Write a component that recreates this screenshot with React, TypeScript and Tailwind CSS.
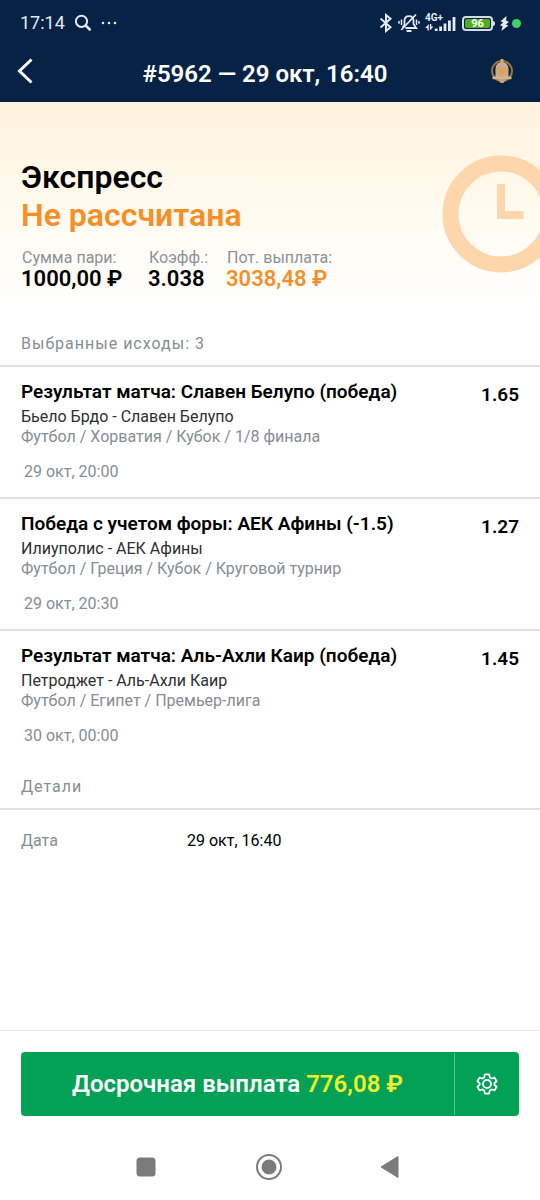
import type { ReactNode } from "react";

interface Outcome {
	id: number;
	title: string;
	match: string;
	league: string;
	date: string;
	odds: string;
}

const outcomes: Outcome[] = [
	{
		id: 1,
		title: "Результат матча: Славен Белупо (победа)",
		match: "Бьело Брдо - Славен Белупо",
		league: "Футбол / Хорватия / Кубок / 1/8 финала",
		date: "29 окт, 20:00",
		odds: "1.65",
	},
	{
		id: 2,
		title: "Победа с учетом форы: АЕК Афины (-1.5)",
		match: "Илиуполис - АЕК Афины",
		league: "Футбол / Греция / Кубок / Круговой турнир",
		date: "29 окт, 20:30",
		odds: "1.27",
	},
	{
		id: 3,
		title: "Результат матча: Аль-Ахли Каир (победа)",
		match: "Петроджет - Аль-Ахли Каир",
		league: "Футбол / Египет / Премьер-лига",
		date: "30 окт, 00:00",
		odds: "1.45",
	},
];

const StatusBar = () => (
	<div className="flex h-[46px] items-center justify-between pl-5 pr-[19px] text-[#e3e9f5]">
		<div className="flex items-center gap-[9px]">
			<span className="text-lg leading-6">17:14</span>
			<svg width="18" height="18" viewBox="0 0 18 18" fill="none" stroke="currentColor" strokeWidth="2">
				<circle cx="7.5" cy="7.3" r="5.6" />
				<path d="M11.6 11.4 L16.5 16.2" strokeWidth="2.6" />
			</svg>
			<svg width="16" height="4" viewBox="0 0 16 4" fill="currentColor">
				<circle cx="2" cy="2" r="1.3" />
				<circle cx="8" cy="2" r="1.3" />
				<circle cx="14" cy="2" r="1.3" />
			</svg>
		</div>
		<div className="flex items-center gap-[5px]">
			<svg width="14" height="20" viewBox="0 0 14 20" fill="none" stroke="currentColor" strokeWidth="2">
				<path d="M1.5 5.5 L11.5 14.3 L7 18 V2 L11.5 5.7 L1.5 14.5" />
			</svg>
			<svg width="22" height="20" viewBox="0 0 22 20" fill="none" stroke="currentColor" strokeWidth="1.8">
				<path d="M4.5 14.5 L6.5 11.8 V8 C6.5 4.8 8.4 3.2 11 3.2 C13.6 3.2 15.5 4.8 15.5 8 V11 L18.2 15 H7.5" />
				<path d="M18 1.5 L3.2 17" />
				<path d="M8.5 18 H13.5" strokeWidth="2" />
				<path d="M3.5 6.5 V12 M1 8 V10.8 M18.5 6.5 V12 M21 8 V10.8" strokeWidth="1.5" />
			</svg>
			<div className="relative h-5 w-8">
				<span className="absolute left-0 top-0 text-[10px] font-bold leading-[10px]">4G+</span>
				<svg className="absolute inset-0" width="32" height="20" viewBox="0 0 32 20" fill="currentColor">
					<path d="M3.8 11 V17.5 H2.4 V15 H0.2 Z M4.9 17.5 V11 H6.3 V13.5 H8.5 Z" />
					<rect x="9.8" y="15.5" width="2.8" height="2.5" />
					<rect x="14.2" y="13.5" width="2.8" height="4.5" />
					<rect x="18.6" y="10.5" width="2.8" height="7.5" />
					<rect x="23" y="7.5" width="2.8" height="10.5" />
					<rect x="27.6" y="4" width="2.8" height="14" />
				</svg>
			</div>
			<div className="flex items-center">
				<span className="flex h-[15px] w-[31px] rounded border-2 border-[#d5dae8] p-px">
					<span className="flex flex-1 items-center justify-center rounded-xs bg-[#4fae1c] text-[11px] font-bold leading-none text-white">
						96
					</span>
				</span>
				<span className="h-[5px] w-[2px] rounded-r bg-[#d5dae8]" />
			</div>
			<div className="flex items-center gap-[3px]">
				<svg width="9" height="15" viewBox="0 0 9 15" fill="currentColor">
					<path d="M6.4 0 L0.6 5.2 L3.2 6.4 L0 9.2 L2.6 10.2 L1.4 15 L8.4 9.6 L5.8 8.6 L9 5.8 L6.2 4.8 Z" />
				</svg>
				<span className="size-[9px] rounded-full bg-[#3fd06c]" />
			</div>
		</div>
	</div>
);

const TitleBar = () => (
	<div className="grid h-14 grid-cols-[48px_1fr_48px] items-center pl-1 pr-[14px]">
		<button type="button" aria-label="Назад" className="flex h-full items-center pb-[6px] pl-3 text-white">
			<svg width="18" height="26" viewBox="0 0 18 26" fill="none" stroke="currentColor" strokeWidth="3">
				<path d="M15.5 1.5 L3.5 13 L15.5 24.5" />
			</svg>
		</button>
		<h1 className="text-center text-2xl font-semibold leading-8 text-white">#5962 — 29 окт, 16:40</h1>
		<button type="button" aria-label="Уведомления" className="flex h-full items-center justify-center pb-[6px]">
			<svg width="24" height="26" viewBox="0 0 24 26">
				<circle cx="12" cy="13" r="10" fill="#0b2140" stroke="#9b7240" strokeWidth="2" />
				<path d="M5.5 19.5 V11.5 C5.5 7 8 4.2 12 4.2 C16 4.2 18.5 7 18.5 11.5 V19.5 Z" fill="#bfb1a4" />
				<rect x="10.4" y="1" width="3.2" height="4" rx="1" fill="#dfa865" />
				<rect x="2.4" y="18.6" width="19.2" height="2.6" rx="1" fill="#d3b490" />
				<path d="M7.5 21 H16.5 C15.6 23 14 23.6 13.6 25 H10.4 C10 23.6 8.4 23 7.5 21 Z" fill="#c8a274" />
				<circle cx="12" cy="13" r="5.6" fill="#b9aca2" stroke="#d9a76b" strokeWidth="1.2" />
				<circle cx="12" cy="13" r="3" fill="#f29a35" />
			</svg>
		</button>
	</div>
);

interface StatProps {
	label: string;
	value: string;
	accent?: boolean;
}

const Stat = (props: StatProps) => (
	<div>
		<dt className="pl-px text-base leading-5 text-[#8b9299]">{props.label}</dt>
		<dd className={`text-[22px] font-semibold leading-[22px] ${props.accent ? "text-[#f68f27]" : "text-black"}`}>
			{props.value}
		</dd>
	</div>
);

const SectionLabel = ({ children }: { children: ReactNode }) => (
	<h3 className="px-[21px] text-base leading-6 tracking-[1px] text-[#858d95]">{children}</h3>
);

const OutcomeRow = ({ outcome }: { outcome: Outcome }) => (
	<li className="flex justify-between border-t-2 border-[#dfe1e4] px-[21px] pb-[15px] pt-[13px]">
		<div>
			<h4 className="text-[19px] font-semibold leading-6 text-black">{outcome.title}</h4>
			<p className="mt-[3px] text-base leading-5 text-[#2d2f31]">{outcome.match}</p>
			<p className="text-base leading-5 text-[#858d95]">{outcome.league}</p>
			<p className="mt-[15px] pl-[3px] text-base leading-5 text-[#858d95]">{outcome.date}</p>
		</div>
		<span className="pt-[3px] text-[19px] font-semibold leading-6 text-black">{outcome.odds}</span>
	</li>
);

const NavBar = () => (
	<nav className="flex h-[66px] items-center justify-center gap-[97px] pr-[7px] text-[#7b7b7b]">
		<button type="button" aria-label="Недавние">
			<svg width="24" height="28" viewBox="0 0 24 28" fill="currentColor">
				<rect x="2.5" y="4.5" width="19" height="19" rx="3.5" />
			</svg>
		</button>
		<button type="button" aria-label="Домой">
			<svg width="28" height="28" viewBox="0 0 28 28">
				<circle cx="14" cy="14" r="12" fill="none" stroke="currentColor" strokeWidth="2" />
				<circle cx="14" cy="14" r="7.5" fill="currentColor" />
			</svg>
		</button>
		<button type="button" aria-label="Назад">
			<svg width="20" height="28" viewBox="0 0 20 28" fill="currentColor" stroke="currentColor" strokeLinejoin="round">
				<path d="M18 3.5 V24.5 L1 14 Z" />
			</svg>
		</button>
	</nav>
);

const App = () => (
	<div className="flex min-h-screen flex-col bg-white font-['Roboto',sans-serif]">
		<header className="bg-[#062245]">
			<StatusBar />
			<TitleBar />
		</header>

		<main className="flex-1">
			<section className="relative overflow-hidden bg-linear-to-b from-[#fff3dd] via-[#fffaee] to-white px-[21px] pb-5 pt-14">
				<svg className="absolute -right-5 top-[53px]" width="118" height="118" viewBox="0 0 118 118" fill="none" stroke="#fed6ac">
					<circle cx="59" cy="59" r="50.5" strokeWidth="16" />
					<path d="M59 29 V60 H81.5" strokeWidth="8" />
				</svg>
				<h2 className="text-[32px] font-semibold leading-[38px] text-black">
					Экспресс
					<span className="block text-[#f68f27]">Не рассчитана</span>
				</h2>
				<dl className="mt-[14px] flex">
					<div className="w-[127px]">
						<Stat label="Сумма пари:" value="1000,00 ₽" />
					</div>
					<div className="w-[78px]">
						<Stat label="Коэфф.:" value="3.038" />
					</div>
					<Stat label="Пот. выплата:" value="3038,48 ₽" accent />
				</dl>
			</section>

			<section className="pt-[22px]">
				<SectionLabel>Выбранные исходы: 3</SectionLabel>
				<ul className="mt-[9px]">
					{outcomes.map((outcome) => (
						<OutcomeRow key={outcome.id} outcome={outcome} />
					))}
				</ul>
			</section>

			<section className="pt-[14px]">
				<SectionLabel>Детали</SectionLabel>
				<dl className="mt-[9px] flex border-t-2 border-[#dfe1e4] px-[21px] py-[21px] text-base leading-5">
					<dt className="w-1/3 text-[#858d95]">Дата</dt>
					<dd className="text-black">29 окт, 16:40</dd>
				</dl>
			</section>
		</main>

		<footer>
			<div className="border-t border-[#e6e6e6] px-[21px] pb-[18px] pt-[21px]">
				<div className="flex h-16 rounded bg-[#02a156] text-white">
					<button type="button" className="flex-1 text-2xl font-semibold leading-8">
						Досрочная выплата <span className="text-[#eef02c]">776,08 ₽</span>
					</button>
					<button
						type="button"
						aria-label="Настройки"
						className="my-px flex w-[65px] items-center justify-center border-l border-[#5cc491]"
					>
						<svg width="24" height="24" viewBox="0 0 24 24" fill="none" stroke="currentColor" strokeWidth="1.8" strokeLinejoin="round">
							<circle cx="12" cy="12" r="4" />
							<path d="M9.9 2.4 H14.1 L14.8 5.4 L16.6 6.5 L19.5 5.6 L21.6 9.3 L19.4 11.2 V12.8 L21.6 14.7 L19.5 18.4 L16.6 17.5 L14.8 18.6 L14.1 21.6 H9.9 L9.2 18.6 L7.4 17.5 L4.5 18.4 L2.4 14.7 L4.6 12.8 V11.2 L2.4 9.3 L4.5 5.6 L7.4 6.5 L9.2 5.4 Z" />
						</svg>
					</button>
				</div>
			</div>
			<NavBar />
		</footer>
	</div>
);

export default App;
